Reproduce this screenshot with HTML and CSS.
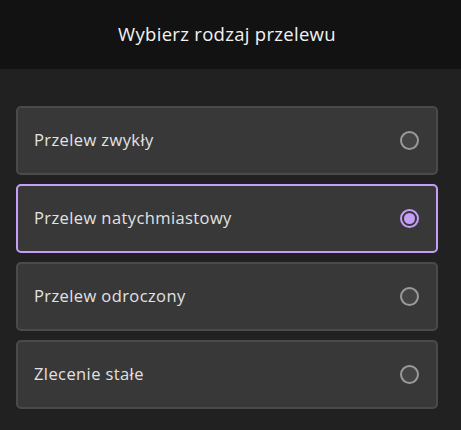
FILE: index.html
```html
<!DOCTYPE html>
<html lang="pl">
<head>
<meta charset="utf-8">
<link rel="stylesheet" href="styles.css">
</head>
<body>
<header class="header"><h1 class="title">Wybierz rodzaj przelewu</h1></header>
<main class="list">
  <label class="option"><span class="label">Przelew zwykły</span><span class="radio"></span></label>
  <label class="option selected"><span class="label">Przelew natychmiastowy</span><span class="radio"></span></label>
  <label class="option"><span class="label">Przelew odroczony</span><span class="radio"></span></label>
  <label class="option"><span class="label">Zlecenie stałe</span><span class="radio"></span></label>
</main>
</body>
</html>
```
FILE: styles.css
```css
html, body { margin: 0; padding: 0; }
body {
  background: #212121;
  font-family: "Open Sans", "Noto Sans", sans-serif;
  width: 461px;
  height: 430px;
  overflow: hidden;
}
.header {
  background: #121212;
  height: 69px;
  display: flex;
  align-items: center;
  justify-content: center;
  padding-right: 7px;
}
.title {
  margin: 0;
  font-size: 18.5px;
  font-weight: 400;
  color: #f2f2f2;
  letter-spacing: 0.3px;
  padding-bottom: 2px;
}
.list {
  padding: 37px 23px 0 16px;
  display: flex;
  flex-direction: column;
  gap: 9px;
}
.option {
  box-sizing: border-box;
  height: 69px;
  background: #383838;
  border: 2px solid #4a4a4a;
  border-radius: 5px;
  display: flex;
  align-items: center;
  justify-content: space-between;
  padding: 0 17px 0 16px;
}
.option.selected { border-color: #c49ef7; }
.label {
  font-size: 16.5px;
  color: #e2e2e2;
  letter-spacing: 0.4px;
  padding-bottom: 2px;
}
.radio {
  box-sizing: border-box;
  width: 19px;
  height: 19px;
  border-radius: 50%;
  border: 2px solid #9a9a9a;
  background: #444;
  display: flex;
  align-items: center;
  justify-content: center;
}
.selected .radio { border-color: #c49ef7; background: transparent; }
.selected .radio::after {
  content: "";
  width: 11px;
  height: 11px;
  border-radius: 50%;
  background: #c49ef7;
}
```
